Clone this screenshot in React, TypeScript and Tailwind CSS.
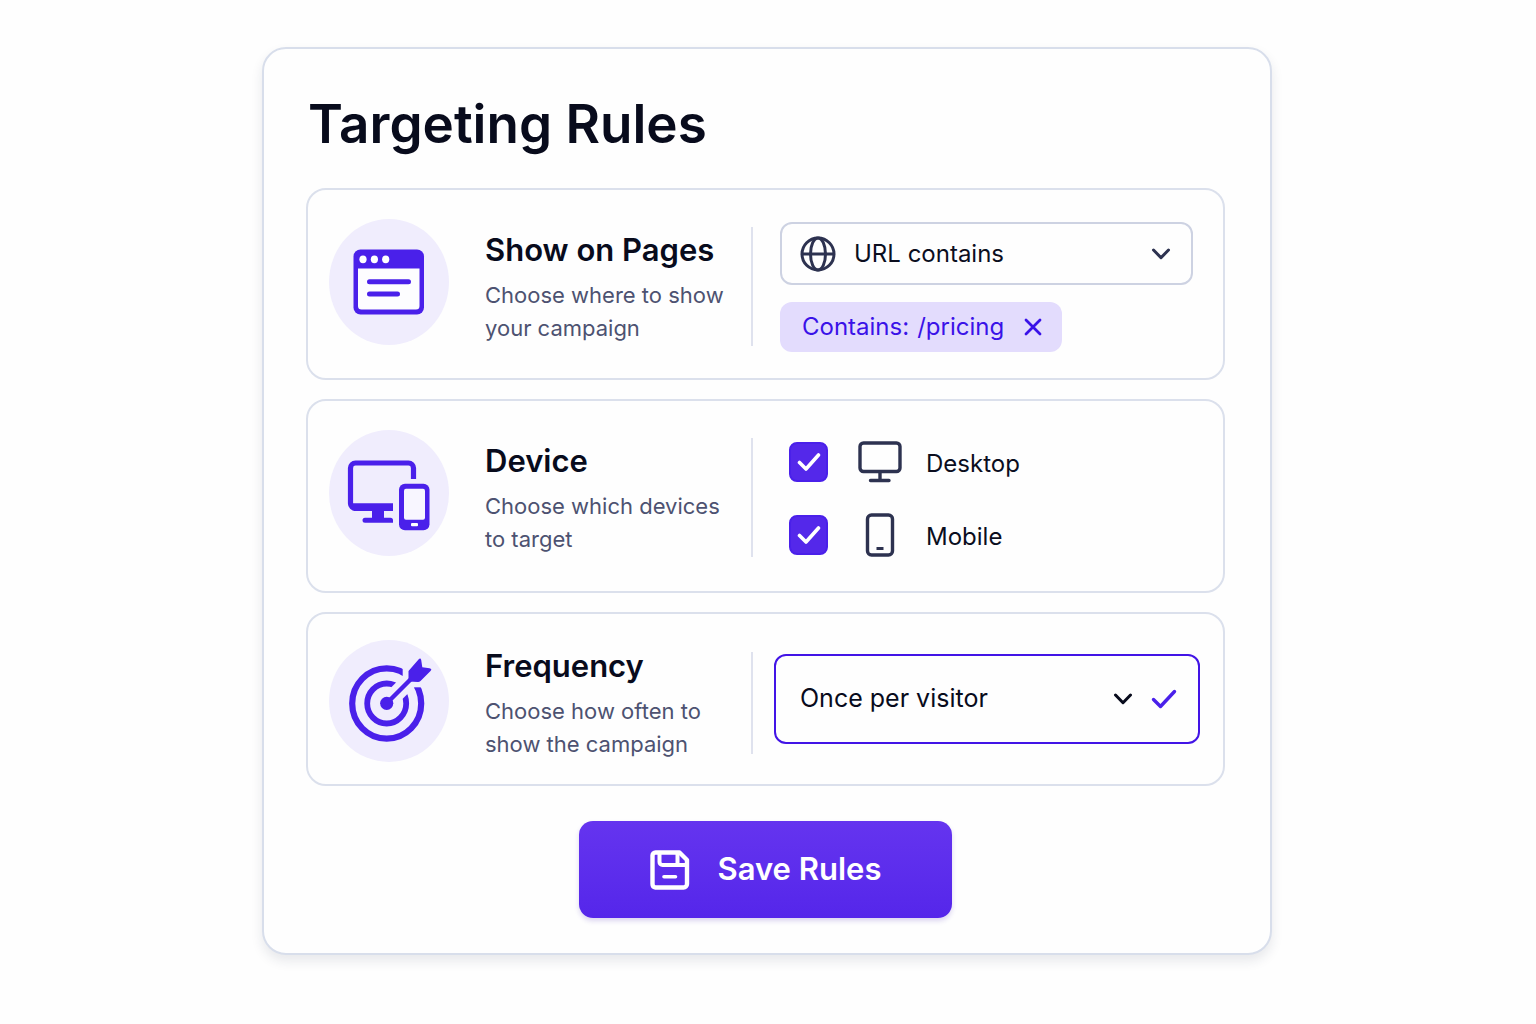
import React, { useState } from "react";

function PagesIcon() {
  return (
    <svg viewBox="0 0 120 126" className="h-[126px] w-[120px]" aria-hidden="true">
      <rect x="24.5" y="30.5" width="70.5" height="65" rx="7" fill="#4a20ea" />
      <path d="M29 49.5H90.5V87a3.5 3.5 0 0 1-3.5 3.5H32.5A3.5 3.5 0 0 1 29 87Z" fill="#fdfdff" />
      <g fill="#fff">
        <ellipse cx="34" cy="40.3" rx="3.6" ry="3.9" />
        <ellipse cx="45.4" cy="40.3" rx="3.6" ry="3.9" />
        <ellipse cx="56.7" cy="40.3" rx="3.6" ry="3.9" />
      </g>
      <path d="M40.5 62.7H79.5M40.5 75H68.5" stroke="#4a20ea" strokeWidth="5" strokeLinecap="round" />
    </svg>
  );
}

function DevicesIcon() {
  return (
    <svg viewBox="0 0 120 126" className="h-[126px] w-[120px]" aria-hidden="true">
      <path
        d="M84.5 49V38a5 5 0 0 0-5-5H26.5a5 5 0 0 0-5 5V73.500a5 5 0 0 0 5 5H64"
        fill="none"
        stroke="#4a20ea"
        strokeWidth="5.2"
      />
      <path d="M21 73.300H64V81H55V87.700H61.500a2.500 2.500 0 0 1 2.500 2.500V92.700H36a2.500 2.500 0 0 1 0-5H43V81H25Z" fill="#4a20ea" />
      <rect x="70" y="53.7" width="30.5" height="46.6" rx="6" fill="#4a20ea" />
      <rect x="75" y="58.7" width="21" height="31" rx="2" fill="#f8f6ff" />
      <rect x="82" y="93" width="7" height="3.2" rx="1" fill="#fff" />
    </svg>
  );
}

function TargetIcon() {
  return (
    <svg viewBox="0 0 120 122" className="h-[122px] w-[120px]" aria-hidden="true">
      <ellipse cx="57.7" cy="63.5" rx="34.5" ry="35.2" fill="none" stroke="#4a20ea" strokeWidth="6.2" />
      <rect x="73.7" y="20" width="30" height="27.3" fill="#f0edfd" />
      <ellipse cx="57.7" cy="63.5" rx="19.5" ry="20" fill="none" stroke="#4a20ea" strokeWidth="5.8" />
      <path d="M64 57L80 41" stroke="#f0edfd" strokeWidth="16" />
      <circle cx="57.7" cy="63.3" r="6.6" fill="#4a20ea" />
      <path d="M58 63L84 37" stroke="#4a20ea" strokeWidth="4.4" />
      <path
        d="M79.500 31L89.500 19.500Q91.500 17.500 92.200 20L93.300 27.300L100.500 28.200Q103.500 28.800 101.500 31L91.500 41Q90.500 42 89 42L79.500 41.500Z"
        fill="#4a20ea"
      />
    </svg>
  );
}

function GlobeIcon() {
  return (
    <svg viewBox="0 0 36 36" className="size-9" fill="none" stroke="#2d3250" strokeWidth="3" aria-hidden="true">
      <circle cx="18" cy="18" r="16" />
      <ellipse cx="18" cy="18" rx="7.5" ry="16" />
      <path d="M2 18H34" />
    </svg>
  );
}

function Chevron({ className }: { className: string }) {
  return (
    <svg viewBox="0 0 20 12" className={className} fill="none" stroke="currentColor" strokeWidth="3" strokeLinecap="round" strokeLinejoin="round" aria-hidden="true">
      <path d="M2.500 2L10 9.700L17.500 2" />
    </svg>
  );
}

function DesktopIcon() {
  return (
    <svg viewBox="0 0 44 42" className="h-[42px] w-11" fill="none" stroke="#2d3250" strokeWidth="3.4" strokeLinecap="round" aria-hidden="true">
      <rect x="2" y="2" width="40" height="28.5" rx="3.5" />
      <path d="M22 31V39M12.500 39.500H31" />
    </svg>
  );
}

function MobileIcon() {
  return (
    <svg viewBox="0 0 44 44" className="size-11" fill="none" stroke="#2d3250" strokeWidth="3.4" aria-hidden="true">
      <rect x="9.5" y="2" width="25" height="40" rx="4" />
      <path d="M18.500 35.500H25.500" strokeWidth="3" />
    </svg>
  );
}

function SaveIcon() {
  return (
    <svg viewBox="0 0 40 40" className="size-10" fill="none" stroke="#fff" strokeWidth="4.4" strokeLinejoin="round" aria-hidden="true">
      <path d="M5.500 2.500H29.500L37 10V34a3.500 3.500 0 0 1-3.500 3.500H5.500A3.500 3.500 0 0 1 2.500 34V5.500a3 3 0 0 1 3-3Z" />
      <path d="M9.500 3V12a3 3 0 0 0 3 3H36M27.500 3V15" strokeWidth="4" />
      <path d="M14 26.800H25.500" strokeWidth="3.6" strokeLinecap="round" />
    </svg>
  );
}

type RuleProps = {
  icon: React.ReactNode;
  title: string;
  lines: [string, string];
  padding: string;
  compact?: boolean;
  children: React.ReactNode;
};

function Rule({ icon, title, lines, padding, compact = false, children }: RuleProps) {
  return (
    <section className={`flex items-start rounded-[20px] border-2 border-[#dbe0ec] pl-[21px] ${padding}`}>
      <div className="shrink-0 rounded-[50%] bg-[#f0edfd]">{icon}</div>
      <div className={`ml-9 w-[266px] shrink-0 ${compact ? "pt-[6px]" : "pt-[11px]"}`}>
        <h2 className="text-[31px] leading-[40px] font-semibold whitespace-nowrap text-[#080b1c]">{title}</h2>
        <p className="mt-[9px] text-[22px] leading-[33px] whitespace-nowrap text-[#4d5271]">
          {lines[0]}
          <br />
          {lines[1]}
        </p>
      </div>
      <div className={`w-0.5 shrink-0 bg-[#dfe2ee] ${compact ? "mt-3 h-[102px]" : "mt-2 h-[119px]"}`} />
      <div className="min-w-0 flex-1">{children}</div>
    </section>
  );
}

function DeviceOption({ label, icon }: { label: string; icon: React.ReactNode }) {
  const [checked, setChecked] = useState(true);
  return (
    <label className="flex h-11 items-center text-[24px] text-[#0b0e1e]">
      <span className="grid place-items-center">
        <input
          type="checkbox"
          checked={checked}
          onChange={(e) => setChecked(e.target.checked)}
          className="peer col-start-1 row-start-1 h-10 w-[39px] appearance-none rounded-lg border-2 border-[#4a20ea] checked:bg-[#5428ea]"
        />
        <svg viewBox="0 0 24 20" className="pointer-events-none invisible col-start-1 row-start-1 h-5 w-6 peer-checked:visible" fill="none" stroke="#fff" strokeWidth="3.6" strokeLinecap="round" strokeLinejoin="round" aria-hidden="true">
          <path d="M2.500 10.500L9 17L21.500 3" />
        </svg>
      </span>
      <span className="ml-[30px]">{icon}</span>
      <span className="ml-6 pt-1">{label}</span>
    </label>
  );
}

export default function App() {
  const [tag, setTag] = useState(true);
  return (
    <main className="min-h-screen bg-[#fefefe] py-[47px] pr-[26px] pl-6 font-['Inter',sans-serif]">
      <div className="mx-auto w-full max-w-[1010px] rounded-[24px] border-2 border-[#d8deeb] bg-[#fefefe] pt-[43px] pr-[45px] pb-[35px] pl-[42px] shadow-[0_6px_12px_rgba(30,35,70,0.10)]">
        <h1 className="pl-0.5 text-[53px] leading-[64px] font-semibold text-[#080b1c]">Targeting Rules</h1>

        <div className="mt-8 flex flex-col gap-[19px]">
          <Rule icon={<PagesIcon />} title="Show on Pages" lines={["Choose where to show", "your campaign"]} padding="pt-[29px] pb-[26px]">
            <div className="pt-[3px] pr-[30px] pl-[27px]">
              <div className="relative">
                <select aria-label="Page rule" className="block h-[63px] w-full appearance-none rounded-xl border-2 border-[#cdd2e2] bg-transparent pr-14 pl-[72px] text-[24px] text-[#0b0e1e]">
                  <option>URL contains</option>
                  <option>URL equals</option>
                </select>
                <span className="pointer-events-none absolute inset-y-0 left-5 flex items-center">
                  <GlobeIcon />
                </span>
                <span className="pointer-events-none absolute inset-y-0 right-[22px] flex items-center">
                  <Chevron className="h-3 w-5 text-[#2d3250]" />
                </span>
              </div>
              {tag && (
                <div className="mt-[17px] flex h-[50px] w-fit items-center rounded-xl bg-[#e3dcfd] pr-5 pl-[22px] text-[24px] text-[#3a12e8]">
                  <span>Contains:</span>
                  <span className="ml-2">/pricing</span>
                  <button type="button" aria-label="Remove /pricing" onClick={() => setTag(false)} className="ml-5">
                    <svg viewBox="0 0 18 18" className="size-[18px]" stroke="currentColor" strokeWidth="2.8" strokeLinecap="round" aria-hidden="true">
                      <path d="M2 2L16 16M16 2L2 16" />
                    </svg>
                  </button>
                </div>
              )}
            </div>
          </Rule>

          <Rule icon={<DevicesIcon />} title="Device" lines={["Choose which devices", "to target"]} padding="pt-[29px] pb-[34px]">
            <div className="flex flex-col gap-[29px] pt-[10px] pl-[36px]">
              <DeviceOption label="Desktop" icon={<DesktopIcon />} />
              <DeviceOption label="Mobile" icon={<MobileIcon />} />
            </div>
          </Rule>

          <Rule compact icon={<TargetIcon />} title="Frequency" lines={["Choose how often to", "show the campaign"]} padding="pt-[26px] pb-[22px]">
            <div className="pt-[14px] pr-[23px] pl-[21px]">
              <div className="relative">
                <select aria-label="Frequency" className="block h-[90px] w-full appearance-none rounded-xl border-2 border-[#4214e6] bg-transparent pr-24 pl-6 text-[25px] text-[#080b1c]">
                  <option>Once per visitor</option>
                  <option>Once per session</option>
                </select>
                <span className="pointer-events-none absolute inset-y-0 right-[23px] flex items-center gap-[18px]">
                  <Chevron className="h-3 w-5 text-[#080b1c]" />
                  <svg viewBox="0 0 26 20" className="h-5 w-[26px]" fill="none" stroke="#4a20ea" strokeWidth="3.4" strokeLinecap="round" strokeLinejoin="round" aria-hidden="true">
                    <path d="M2.500 10.500L9.500 17.500L23.500 2.500" />
                  </svg>
                </span>
              </div>
            </div>
          </Rule>
        </div>

        <button
          type="button"
          className="mx-auto mt-[35px] flex h-[97px] w-[373px] items-center justify-center gap-7 rounded-[14px] bg-linear-to-b from-[#6534ef] to-[#5526ea] text-[31px] font-semibold text-white shadow-[0_3px_5px_rgba(60,30,180,0.18)]"
        >
          <SaveIcon />
          Save Rules
        </button>
      </div>
    </main>
  );
}
